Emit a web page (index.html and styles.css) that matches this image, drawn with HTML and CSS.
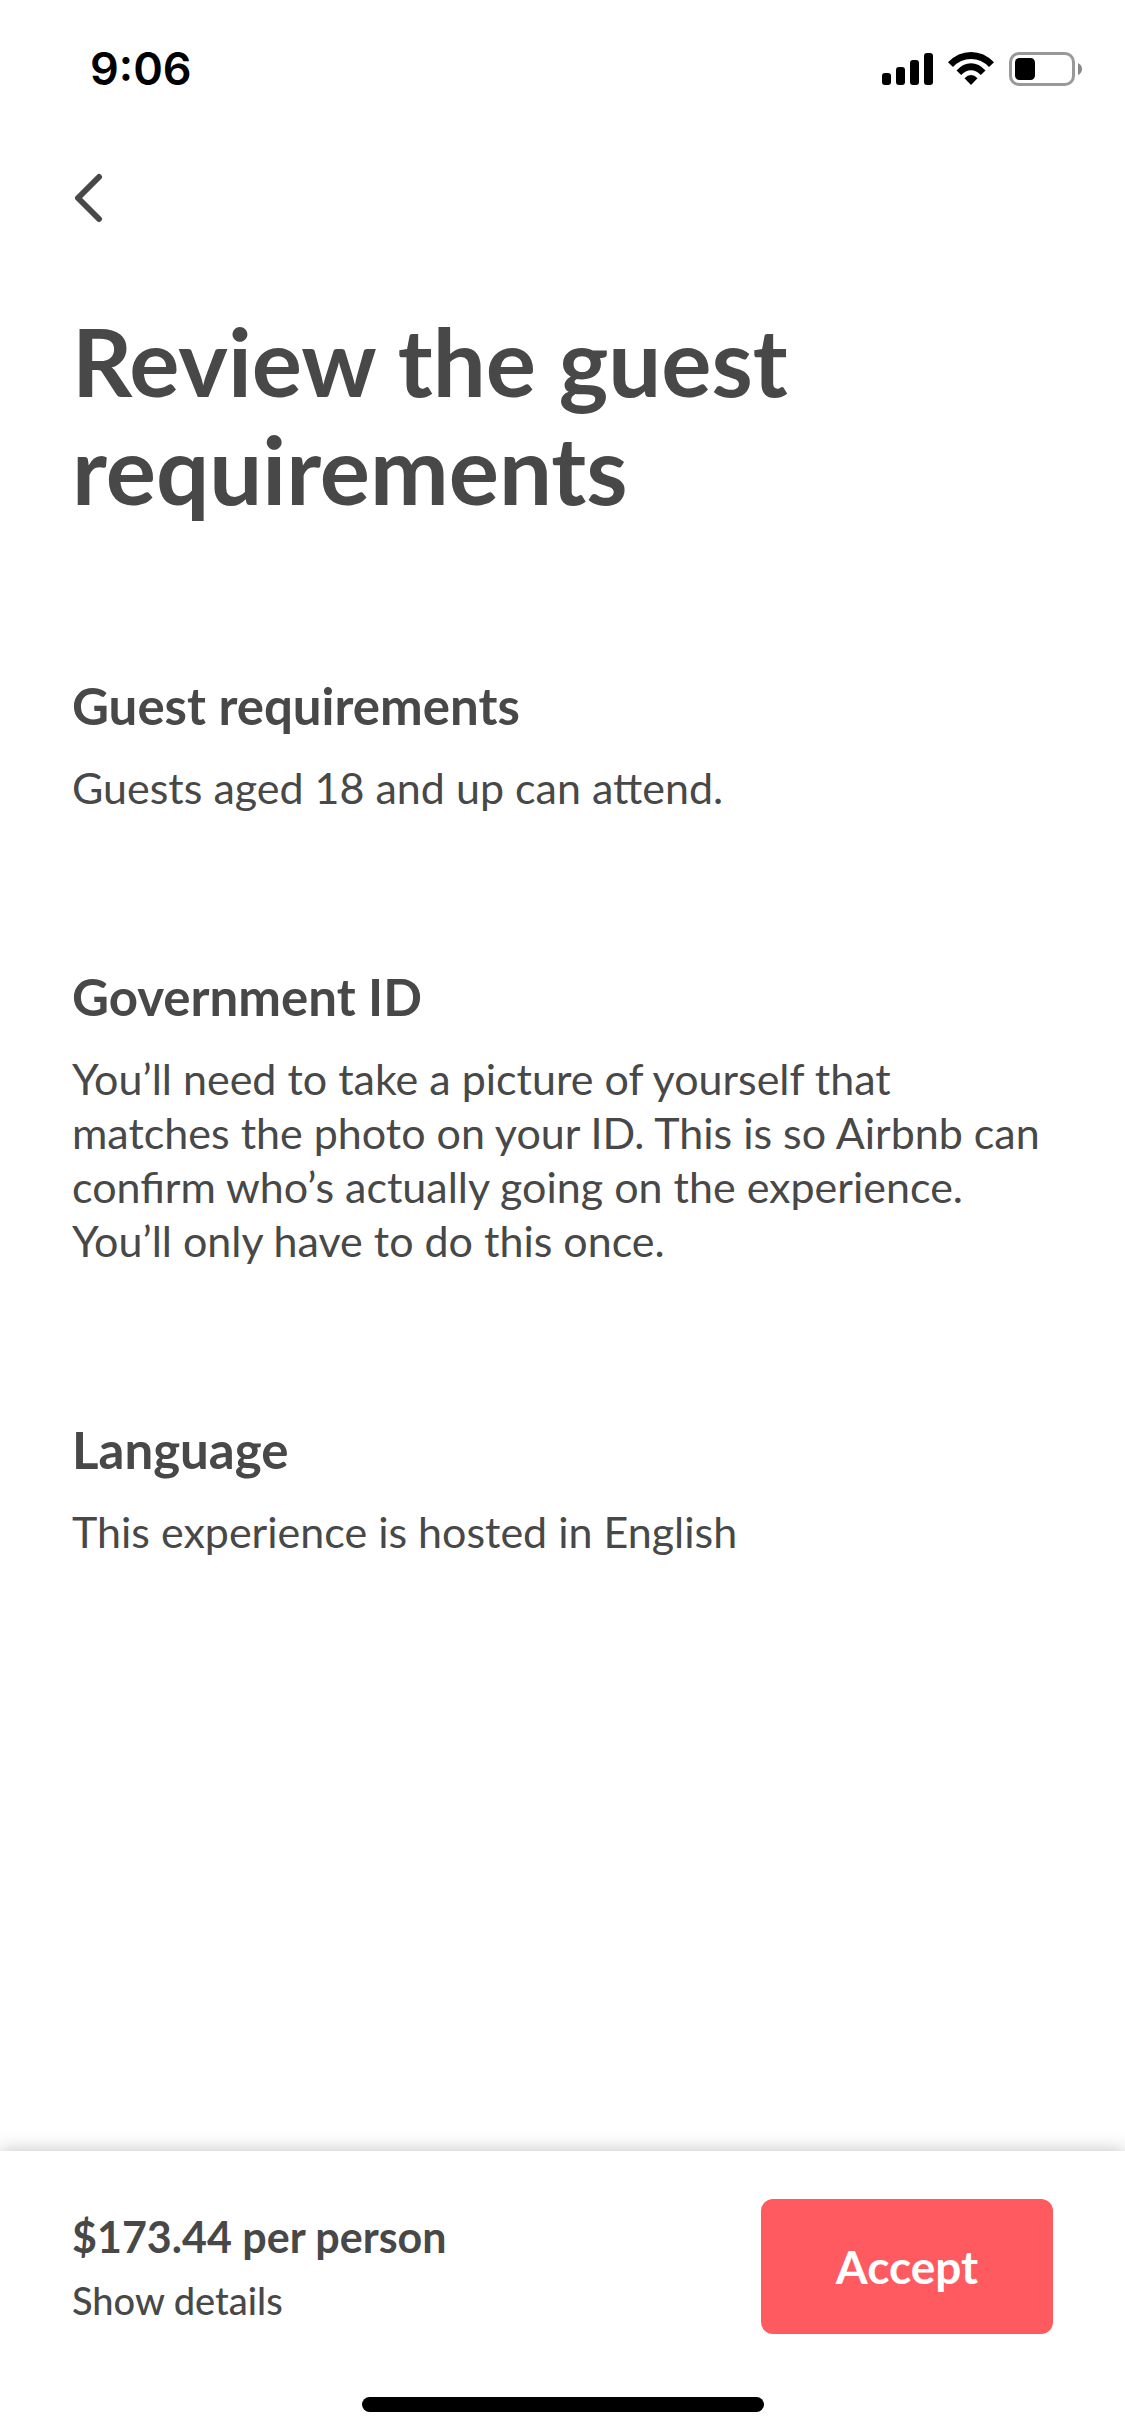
FILE: index.html
```html
<!DOCTYPE html>
<html lang="en">
<head>
<meta charset="utf-8">
<meta name="viewport" content="width=device-width, initial-scale=1">
<title>Review the guest requirements</title>
<link rel="stylesheet" href="styles.css">
</head>
<body>
<div class="screen">
  <div class="status">
    <span class="time">9:06</span>
    <svg class="indicators" width="202" height="36" viewBox="881 51 202 36" aria-hidden="true">
      <rect x="882" y="73" width="9" height="12" rx="3"/>
      <rect x="896" y="67" width="9" height="18" rx="3"/>
      <rect x="910" y="60" width="9" height="25" rx="3"/>
      <rect x="924" y="53" width="9" height="32" rx="3"/>
      <path d="M948 62.300Q958 52 971 52Q984 52 994 62.300L989 67Q981.500 59 971 59Q960.500 59 953 67Z"/>
      <path d="M956.500 70.500Q963 63.200 971 63.200Q979 63.200 985.500 70.500L980.800 75Q976.500 70.200 971 70.200Q965.500 70.200 961.200 75Z"/>
      <path d="M964.500 78.300Q967.500 75 971 75Q974.500 75 977.500 78.300L971 85Z"/>
      <rect x="1010.500" y="53.500" width="63" height="31" rx="8.500" fill="none" stroke="#999" stroke-width="3"/>
      <rect x="1015" y="58" width="20" height="22" rx="4.500"/>
      <path d="M1078 63Q1082 65 1082 69Q1082 73 1078 75Z" fill="#888"/>
    </svg>
  </div>
  <nav class="nav">
    <button class="back" type="button" aria-label="Back">
      <svg width="32" height="50" viewBox="0 0 32 50" aria-hidden="true"><path d="M27 4L6 25L27 46" fill="none" stroke="#484848" stroke-width="6" stroke-linecap="round" stroke-linejoin="round"/></svg>
    </button>
  </nav>
  <main class="content">
    <h1 class="title">Review the guest requirements</h1>
    <section class="section">
      <h2 class="heading">Guest requirements</h2>
      <p class="text">Guests aged 18 and up can attend.</p>
    </section>
    <section class="section">
      <h2 class="heading">Government ID</h2>
      <p class="text">You’ll need to take a picture of yourself that matches the photo on your ID. This is so Airbnb can confirm who’s actually going on the experience. You’ll only have to do this once.</p>
    </section>
    <section class="section">
      <h2 class="heading">Language</h2>
      <p class="text">This experience is hosted in English</p>
    </section>
  </main>
  <footer class="footer">
    <div class="bar">
      <div class="summary">
        <span class="price">$173.44 per person</span>
        <a class="details" href="#details">Show details</a>
      </div>
      <button class="accept" type="button">Accept</button>
    </div>
    <div class="home"></div>
  </footer>
</div>
</body>
</html>
```
FILE: styles.css
```css
* { box-sizing: border-box; }
body {
  margin: 0;
  background: #fff;
  color: #484848;
  font-family: Lato, "Liberation Sans", sans-serif;
}
h1, h2, p { margin: 0; }
button { border: 0; padding: 0; font: inherit; cursor: pointer; }
.screen { min-height: 100vh; display: flex; flex-direction: column; }
.status {
  height: 138px;
  padding: 0 42px 0 90px;
  display: flex;
  align-items: center;
  justify-content: space-between;
  color: #000;
}
.time { font: 600 45px/56px Inter, sans-serif; }
.nav { padding: 35px 72px 0; }
.back { display: block; height: 50px; background: none; }
.back svg { display: block; }
.content { flex: 1; padding: 84px 72px 0; }
.title { font-size: 94px; line-height: 108px; font-weight: 700; padding-bottom: 153px; }
.section { padding-bottom: 152px; }
.heading { font-size: 51px; line-height: 60px; font-weight: 700; margin-bottom: 25px; }
.text { font-size: 43px; line-height: 54px; }
.footer { background: #fff; box-shadow: 0 0 18px rgba(0, 0, 0, .25); }
.bar { padding: 48px 72px 0; display: flex; align-items: center; justify-content: space-between; }
.summary { display: flex; flex-direction: column; gap: 12px; }
.price { font-size: 43px; line-height: 54px; font-weight: 700; }
.details { font-size: 38px; line-height: 48px; color: inherit; text-decoration: none; font-weight: 500; }
.accept {
  width: 292px;
  height: 135px;
  border-radius: 12px;
  background: #ff5a5f;
  color: #fff;
  font-size: 46px;
  font-weight: 700;
}
.home { width: 402px; height: 15px; margin: 63px auto 24px; border-radius: 8px; background: #000; }
```
